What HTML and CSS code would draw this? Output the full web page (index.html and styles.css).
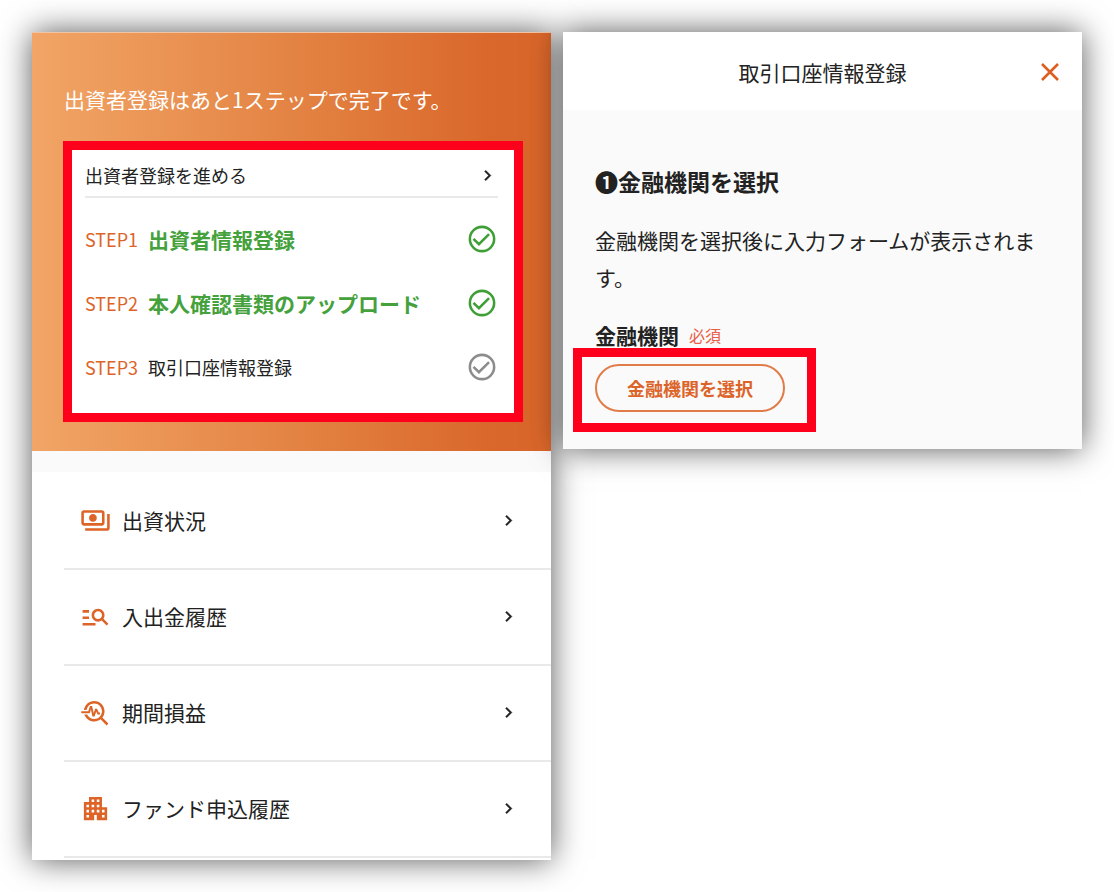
FILE: index.html
```
<!DOCTYPE html>
<html lang="ja">
<head>
    <meta charset="UTF-8">
    <meta name="viewport" content="width=device-width, initial-scale=1.0">
    <title>取引口座情報登録</title>
    <link rel="stylesheet" href="styles.css">
</head>
<body>
    <div class="container">
        <section class="panel">
            <div class="hero">
                <p class="hero-title">出資者登録はあと1ステップで完了です。</p>
                <div class="step-card highlight">
                    <a class="step-link" href="#">
                        <span>出資者登録を進める</span>
                        <svg class="chevron" viewBox="0 0 24 24"><path d="M10 6 8.59 7.41 13.17 12l-4.58 4.59L10 18l6-6z"/></svg>
                    </a>
                    <ol class="steps">
                        <li class="step done">
                            <span class="step-no">STEP1</span>
                            <span class="step-name">出資者情報登録</span>
                            <svg class="check" viewBox="0 0 24 24"><circle cx="12" cy="12" r="9.1"/><path d="M5.6 11.9l4.1 4 7.6-7.6"/></svg>
                        </li>
                        <li class="step done">
                            <span class="step-no">STEP2</span>
                            <span class="step-name">本人確認書類のアップロード</span>
                            <svg class="check" viewBox="0 0 24 24"><circle cx="12" cy="12" r="9.1"/><path d="M5.6 11.9l4.1 4 7.6-7.6"/></svg>
                        </li>
                        <li class="step">
                            <span class="step-no">STEP3</span>
                            <span class="step-name">取引口座情報登録</span>
                            <svg class="check" viewBox="0 0 24 24"><circle cx="12" cy="12" r="9.1"/><path d="M5.6 11.9l4.1 4 7.6-7.6"/></svg>
                        </li>
                    </ol>
                </div>
            </div>

            <nav class="menu">
                <a class="menu-item" href="#">
                    <svg class="menu-icon" viewBox="0 0 24 24"><path d="M19 14V6c0-1.1-.9-2-2-2H3c-1.1 0-2 .9-2 2v8c0 1.1.9 2 2 2h14c1.1 0 2-.9 2-2zm-2 0H3V6h14v8zm-7-7c-1.66 0-3 1.34-3 3s1.34 3 3 3 3-1.34 3-3-1.34-3-3-3zm13 0v11c0 1.1-.9 2-2 2H4v-2h17V7h2z"/></svg>
                    <span class="menu-label">出資状況</span>
                    <svg class="chevron" viewBox="0 0 24 24"><path d="M10 6 8.59 7.41 13.17 12l-4.58 4.59L10 18l6-6z"/></svg>
                </a>
                <a class="menu-item" href="#">
                    <svg class="menu-icon" viewBox="0 0 24 24"><path d="M7 9H2V7h5v2zm0 3H2v2h5v-2zm13.59 7-3.83-3.83c-.8.52-1.74.83-2.76.83-2.76 0-5-2.24-5-5s2.24-5 5-5 5 2.24 5 5c0 1.02-.31 1.96-.83 2.75L22 17.59 20.59 19zM17 11c0-1.65-1.35-3-3-3s-3 1.35-3 3 1.35 3 3 3 3-1.35 3-3zM2 19h10v-2H2v2z"/></svg>
                    <span class="menu-label">入出金履歴</span>
                    <svg class="chevron" viewBox="0 0 24 24"><path d="M10 6 8.59 7.41 13.17 12l-4.58 4.59L10 18l6-6z"/></svg>
                </a>
                <a class="menu-item" href="#">
                    <svg class="menu-icon" viewBox="0 0 24 24"><path d="M22 20.59l-4.69-4.69C18.37 14.55 19 12.85 19 11c0-4.42-3.58-8-8-8-4.08 0-7.44 3.05-7.93 7h2.02C5.57 7.17 8.03 5 11 5c3.31 0 6 2.69 6 6s-2.69 6-6 6c-2.42 0-4.5-1.44-5.45-3.5H3.4C4.45 16.69 7.46 19 11 19c1.85 0 3.55-.63 4.9-1.69L20.59 22 22 20.59z"/><path d="M8.43 9.69 9.65 15h1.64l1.26-3.78.95 2.28h2V12h-1l-1.25-3h-1.54l-1.12 3.37L9.35 7H7.7l-1.25 4H1v1.5h6.55z"/></svg>
                    <span class="menu-label">期間損益</span>
                    <svg class="chevron" viewBox="0 0 24 24"><path d="M10 6 8.59 7.41 13.17 12l-4.58 4.59L10 18l6-6z"/></svg>
                </a>
                <a class="menu-item" href="#">
                    <svg class="menu-icon" viewBox="0 0 24 24"><path d="M17 11V3H7v4H3v14h8v-4h2v4h8V11h-4zM7 19H5v-2h2v2zm0-4H5v-2h2v2zm0-4H5V9h2v2zm4 4H9v-2h2v2zm0-4H9V9h2v2zm0-4H9V5h2v2zm4 8h-2v-2h2v2zm0-4h-2V9h2v2zm0-4h-2V5h2v2zm4 12h-2v-2h2v2zm0-4h-2v-2h2v2z"/></svg>
                    <span class="menu-label">ファンド申込履歴</span>
                    <svg class="chevron" viewBox="0 0 24 24"><path d="M10 6 8.59 7.41 13.17 12l-4.58 4.59L10 18l6-6z"/></svg>
                </a>
            </nav>
        </section>

        <section class="panel">
            <header class="dialog-header">
                <h1>取引口座情報登録</h1>
                <button class="close" type="button" aria-label="閉じる">
                    <svg viewBox="0 0 20 20"><path d="M2 2l16 16M18 2L2 18"/></svg>
                </button>
            </header>
            <div class="dialog-body">
                <h2>❶金融機関を選択</h2>
                <p class="description">金融機関を選択後に入力フォームが表示されます。</p>
                <div class="field-label">
                    <label for="bank-button">金融機関</label>
                    <span class="required">必須</span>
                </div>
                <div class="bank-select highlight">
                    <button class="outline-button" id="bank-button" type="button">金融機関を選択</button>
                </div>
            </div>
        </section>
    </div>
</body>
</html>
```
FILE: styles.css
```
* {
    box-sizing: border-box;
}
body {
    margin: 0;
    padding: 32px;
    font-family: "Noto Sans CJK JP", sans-serif;
    font-size: 21px;
    color: #222;
    background-color: #fff;
}
h1, h2, p, ol {
    margin: 0;
    padding: 0;
}
a {
    color: inherit;
    text-decoration: none;
}
button {
    font-family: inherit;
    cursor: pointer;
}
.container {
    display: grid;
    grid-template-columns: 1fr 1fr;
    align-items: start;
    gap: 12px;
}
.panel {
    background-color: #fafafa;
    box-shadow: 0 0 30px rgba(0, 0, 0, 0.66);
}
.highlight {
    border: 9px solid #ff001c;
}
.chevron {
    flex: none;
    width: 21px;
    height: 21px;
    fill: #222;
    stroke: #222;
    stroke-width: 0.4;
}

/* progress */
.hero {
    padding: 50px 28px 29px 31px;
    border-top: 1px solid #f0c4a4;
    background: linear-gradient(90deg, #f1a566, #e28040 55%, #d9662a 90%);
}
.hero-title {
    margin-bottom: 26px;
    padding-left: 1px;
    line-height: 32px;
    color: #fff;
}
.step-card {
    padding: 0 16px 14px 13px;
    background-color: #fff;
    font-size: 18px;
}
.step-link {
    display: flex;
    align-items: center;
    justify-content: space-between;
    height: 48px;
    margin-bottom: 9px;
    padding-top: 4px;
    border-bottom: 2px solid #e9e9e9;
}
.steps {
    list-style: none;
}
.step {
    display: flex;
    align-items: center;
    height: 64px;
}
.step-no {
    width: 63px;
    color: #dc6429;
}
.step-name {
    flex: 1;
}
.check {
    width: 32px;
    height: 32px;
    fill: none;
    stroke: #8c8c8c;
    stroke-width: 1.9;
}
.done .step-name {
    font-size: 21px;
    font-weight: bold;
    color: #45a13c;
}
.done .check {
    stroke: #3f9f36;
}

/* menu */
.menu {
    margin-top: 21px;
    padding: 2px 0 2px 32px;
    background-color: #fff;
}
.menu-item {
    display: flex;
    align-items: center;
    gap: 11px;
    height: 96px;
    padding: 0 32px 2px 16px;
    border-bottom: 2px solid #e9e9e9;
}
.menu-icon {
    width: 31px;
    height: 31px;
    fill: #dd6326;
}
.menu-label {
    flex: 1;
}

/* account dialog */
.dialog-header {
    display: grid;
    grid-template-columns: 24px 1fr 24px;
    align-items: center;
    height: 78px;
    padding: 2px 20px 0;
    background-color: #fff;
}
.dialog-header h1 {
    grid-column: 2;
    font-size: 21px;
    font-weight: normal;
    text-align: center;
}
.close {
    display: flex;
    padding: 2px;
    border: none;
    background: none;
}
.close svg {
    width: 20px;
    height: 20px;
    fill: none;
    stroke: #dc5f20;
    stroke-width: 2.6;
}
.dialog-body {
    padding: 54px 32px 17px;
}
.dialog-body h2 {
    font-size: 23px;
    line-height: 34px;
}
.description {
    margin: 24px 0 28px;
    line-height: 37px;
}
.field-label {
    display: flex;
    align-items: center;
    gap: 10px;
    margin-bottom: 2px;
    line-height: 22px;
}
.field-label label {
    font-weight: bold;
}
.required {
    font-size: 16px;
    color: #e8604a;
}
.bank-select {
    width: fit-content;
    margin-left: -22px;
    padding: 7px 22px 11px 13px;
}
.outline-button {
    display: block;
    height: 48px;
    padding: 0 30px;
    border: 2px solid #e07c48;
    border-radius: 24px;
    background: none;
    font-size: 18px;
    font-weight: bold;
    color: #dc6429;
}
```
